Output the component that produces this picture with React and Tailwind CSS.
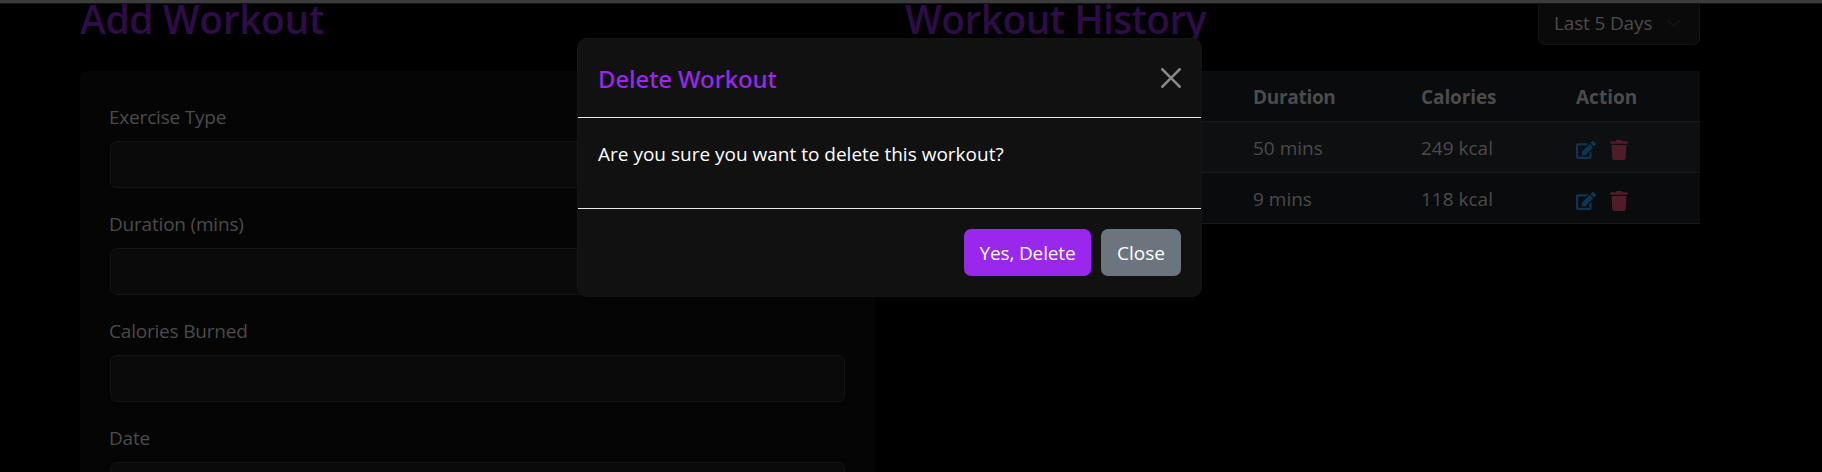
import { FaEdit, FaTrash } from "react-icons/fa";

const fields = ["Exercise Type", "Duration (mins)", "Calories Burned", "Date"];

const rows = [
  { duration: "50 mins", calories: "249 kcal", bg: "bg-[#0d0f10]" },
  { duration: "9 mins", calories: "118 kcal", bg: "bg-[#090b0d]" },
];

const columns = "grid grid-cols-[334px_168px_155px_124px] items-center pl-[14px] pt-0.5";

function WorkoutForm() {
  return (
    <section className="w-[795px]">
      <h2 className="h-[67px] pt-px text-[39px] leading-[28px] font-semibold tracking-[-0.4px] text-[#2e0c47]">
        Add Workout
      </h2>
      <form className="h-[500px] rounded-lg bg-[#050505] px-[30px] pt-[30px]">
        {fields.map((label) => (
          <div key={label} className="h-[107px]">
            <label className="-ml-px block h-10 leading-[32px] tracking-[-0.2px]">{label}</label>
            <div className="h-[47px] rounded-[7px] border border-[#141414] bg-[#0a0a0a]" />
          </div>
        ))}
      </form>
    </section>
  );
}

function WorkoutHistory() {
  return (
    <section className="w-[795px]">
      <div className="flex h-[67px] items-start justify-between">
        <h2 className="pt-px text-[39px] leading-[28px] font-semibold tracking-[-0.6px] text-[#2e0c47]">
          Workout History
        </h2>
        <button className="flex h-[41px] w-[162px] items-center justify-between rounded-b-[7px] border border-t-0 border-[#141414] bg-[#0a0a0a] pr-[18px] pb-[2px] pl-[15px]">
          <span className="tracking-[-0.15px]">Last 5 Days</span>
          <svg className="size-[15px]" viewBox="0 0 16 16" fill="none" stroke="#131313" strokeWidth="2" strokeLinecap="round" strokeLinejoin="round">
            <path d="m2 5 6 6 6-6" />
          </svg>
        </button>
      </div>
      <div>
        <div className={`${columns} h-[51px] border-b border-[#17191a] bg-[#090b0d] font-bold`}>
          <span />
          <span className="tracking-[-0.3px]">Duration</span>
          <span className="tracking-[-0.1px]">Calories</span>
          <span>Action</span>
        </div>
        {rows.map((row) => (
          <div key={row.calories} className={`${columns} h-[51px] border-b border-[#17191a] ${row.bg}`}>
            <span />
            <span>{row.duration}</span>
            <span>{row.calories}</span>
            <span className="flex gap-[13px] pt-[3px]">
              <FaEdit className="size-5 text-[#0f3452]" />
              <FaTrash className="size-5 text-[#4f1c27]" />
            </span>
          </div>
        ))}
      </div>
    </section>
  );
}

function DeleteDialog() {
  return (
    <div className="absolute top-[38px] left-[577px] w-[625px] overflow-hidden rounded-[10px] border border-[#151515] bg-[#111111] text-white">
      <header className="flex h-[79px] items-center justify-between border-b border-[#e6e8ea] px-5">
        <h5 className="pt-0.5 font-['Noto_Sans',sans-serif] text-[24px] font-medium tracking-[-0.1px] text-[#9a27ec]">Delete Workout</h5>
        <svg className="size-5" viewBox="0 0 16 16" fill="#888888">
          <path d="M.293.293a1 1 0 0 1 1.414 0L8 6.586 14.293.293a1 1 0 1 1 1.414 1.414L9.414 8l6.293 6.293a1 1 0 0 1-1.414 1.414L8 9.414l-6.293 6.293a1 1 0 0 1-1.414-1.414L6.586 8 .293 1.707a1 1 0 0 1 0-1.414z" />
        </svg>
      </header>
      <div className="h-[90px] px-5 pt-5">
        <p className="leading-[32px]">Are you sure you want to delete this workout?</p>
      </div>
      <footer className="flex h-[88px] items-start justify-end gap-[10px] border-t border-[#e6e8ea] px-5 pt-5">
        <button className="h-[47px] w-[127px] rounded-[7px] bg-[#9a27ec] pt-px tracking-[-0.15px]">Yes, Delete</button>
        <button className="h-[47px] w-[80px] rounded-[7px] bg-[#6c757d] pt-px">Close</button>
      </footer>
    </div>
  );
}

export default function App() {
  return (
    <div className="relative h-[472px] w-[1822px] overflow-hidden bg-black font-['Open_Sans','Noto_Sans',sans-serif] text-[19px] whitespace-nowrap text-[#4b4b4b]">
      <div className="h-1 border-b border-[#151515] bg-[#3c3c3c]" />
      <main className="flex gap-[30px] pl-20">
        <WorkoutForm />
        <WorkoutHistory />
      </main>
      <DeleteDialog />
    </div>
  );
}
